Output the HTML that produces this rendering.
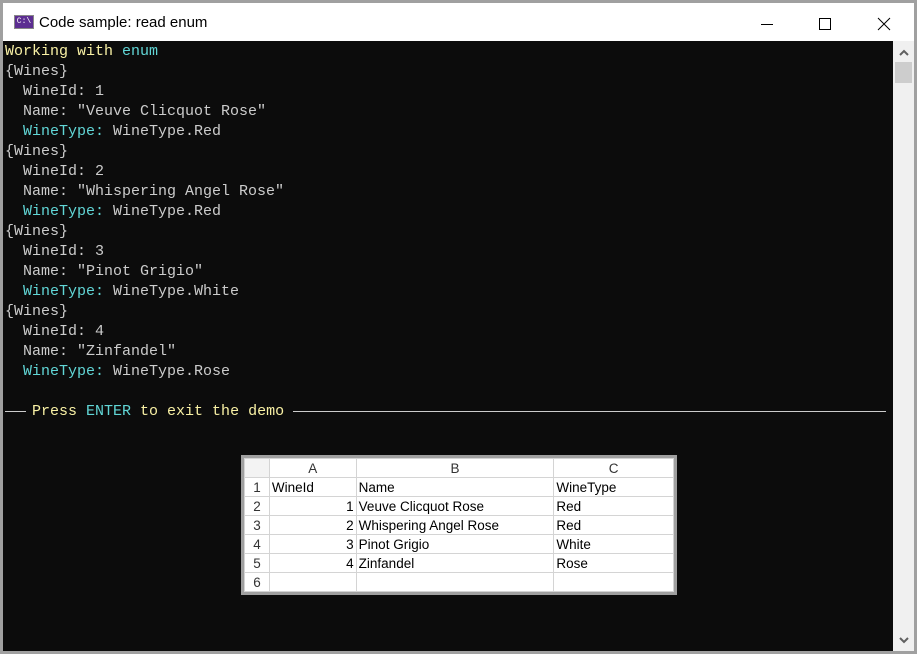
<!DOCTYPE html>
<html><head><style>
*{margin:0;padding:0;box-sizing:border-box}
body{width:917px;height:654px;background:#a0a0a0;position:relative;overflow:hidden;font-family:"Liberation Sans",sans-serif}
#win{position:absolute;left:3px;top:3px;width:911px;height:648px;background:#0c0c0c}
#title{position:absolute;left:0;top:0;width:911px;height:38px;background:#fff}
#title .t{position:absolute;left:36px;top:11px;font-size:15px;color:#000}
#icon{position:absolute;left:11px;top:12px;width:20px;height:14px;background:#5c2d91;border:1px solid #888;color:#fff;font-size:8px;line-height:12px;text-align:center;font-family:"Liberation Mono",monospace}
#con{position:absolute;left:2px;top:39px;font-family:"Liberation Mono",monospace;font-size:15px;line-height:20px;color:#cccccc;white-space:pre}
.y{color:#f9f1a5}.c{color:#61d6d6}
#sb{position:absolute;left:890px;top:38px;width:21px;height:610px;background:#f0f0f0}
#thumb{position:absolute;left:2px;top:21px;width:17px;height:21px;background:#cdcdcd}
.rule{position:absolute;top:408px;height:1px;background:#ccc}
#xl{position:absolute;left:241px;top:455px;width:436px;height:140px;background:#fff;border:3px solid #a0a0a0}
table{border-collapse:collapse;font-size:13.5px;font-family:"Liberation Sans",sans-serif;color:#000}
td{border:1px solid #d4d4d4;height:19px;padding:0 2px;white-space:nowrap;line-height:17px}
td.h{background:#fff;color:#333;text-align:center}
.r{text-align:right}
</style></head><body>
<div id="win">
<div id="title"><div id="icon">C:\</div><div class="t">Code sample: read enum</div>
<svg style="position:absolute;left:758px;top:14px" width="130" height="14"><line x1="0" y1="7.5" x2="12" y2="7.5" stroke="#000"/><rect x="58.5" y="1.5" width="11" height="11" fill="none" stroke="#000"/><path d="M117 1 L129 13 M129 1 L117 13" stroke="#000"/></svg></div>
<div id="con"><span class="y">Working with </span><span class="c">enum</span>
{Wines}
  WineId: 1
  Name: "Veuve Clicquot Rose"
  <span class="c">WineType:</span> WineType.Red
{Wines}
  WineId: 2
  Name: "Whispering Angel Rose"
  <span class="c">WineType:</span> WineType.Red
{Wines}
  WineId: 3
  Name: "Pinot Grigio"
  <span class="c">WineType:</span> WineType.White
{Wines}
  WineId: 4
  Name: "Zinfandel"
  <span class="c">WineType:</span> WineType.Rose

   <span class="y">Press </span><span class="c">ENTER</span><span class="y"> to exit the demo</span></div>
<div class="rule" style="left:2px;width:21px"></div>
<div class="rule" style="left:290px;width:593px"></div>
<div id="sb"><svg style="position:absolute;left:6px;top:8px" width="10" height="7"><path d="M1 6 L5 2 L9 6" stroke="#606060" stroke-width="2" fill="none"/></svg><div id="thumb"></div>
<svg style="position:absolute;left:6px;top:596px" width="10" height="7"><path d="M1 1 L5 5 L9 1" stroke="#606060" stroke-width="2" fill="none"/></svg></div>
</div>
<div id="xl"><table>
<tr><td class="h" style="width:25px;background:#f3f3f3"></td><td class="h" style="width:87px">A</td><td class="h" style="width:198px">B</td><td class="h" style="width:120px">C</td></tr>
<tr><td class="h">1</td><td>WineId</td><td>Name</td><td>WineType</td></tr>
<tr><td class="h">2</td><td class="r">1</td><td>Veuve Clicquot Rose</td><td>Red</td></tr>
<tr><td class="h">3</td><td class="r">2</td><td>Whispering Angel Rose</td><td>Red</td></tr>
<tr><td class="h">4</td><td class="r">3</td><td>Pinot Grigio</td><td>White</td></tr>
<tr><td class="h">5</td><td class="r">4</td><td>Zinfandel</td><td>Rose</td></tr>
<tr><td class="h">6</td><td></td><td></td><td></td></tr>
</table></div>
</body></html>
